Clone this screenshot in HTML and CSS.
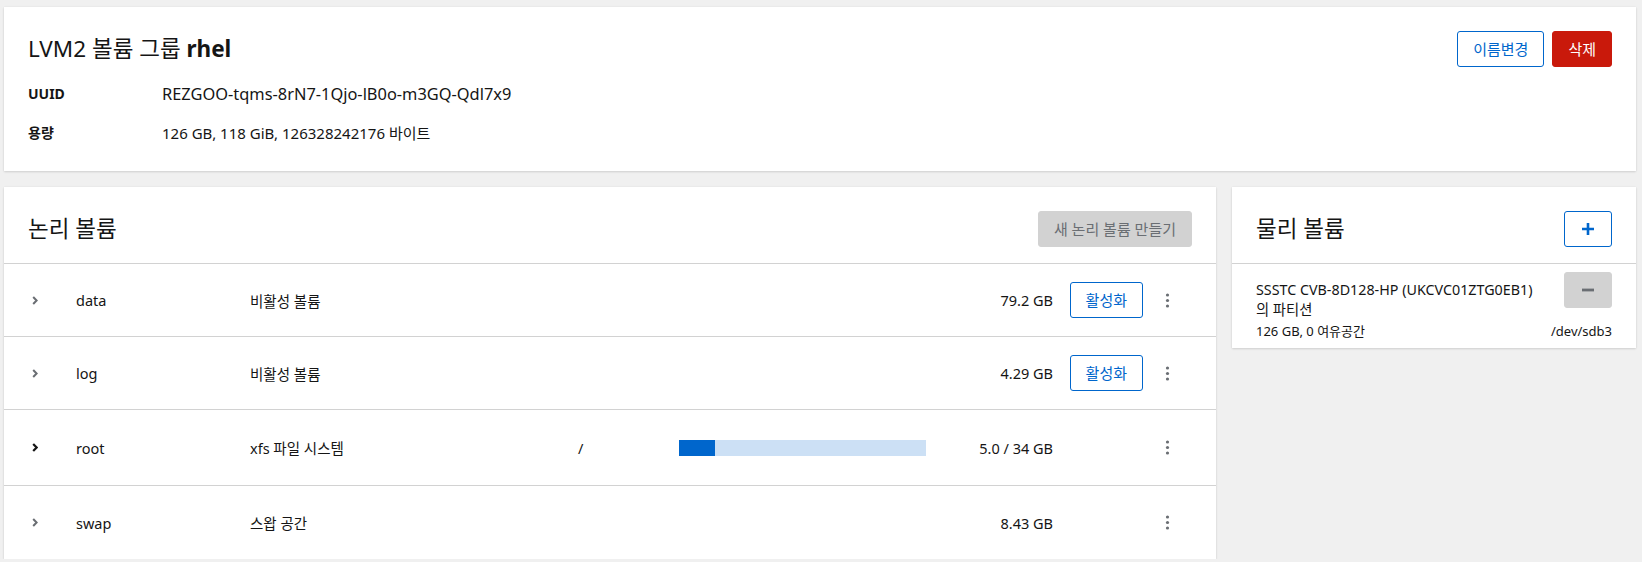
FILE: index.html
```html
<!DOCTYPE html>
<html lang="ko">
<head>
<meta charset="utf-8">
<title>LVM2 볼륨 그룹 rhel</title>
<link rel="stylesheet" href="styles.css">
</head>
<body>
<div class="page">
  <section class="card vg-card">
    <div class="card-head">
      <h1 class="title">LVM2 볼륨 그룹 <b>rhel</b></h1>
      <div class="actions">
        <button class="btn btn-secondary">이름변경</button>
        <button class="btn btn-danger">삭제</button>
      </div>
    </div>
    <dl class="dl">
      <dt>UUID</dt>
      <dd class="uuid">REZGOO-tqms-8rN7-1Qjo-lB0o-m3GQ-Qdl7x9</dd>
      <dt>용량</dt>
      <dd>126 GB, 118 GiB, 126328242176 바이트</dd>
    </dl>
  </section>

  <div class="columns">
    <section class="card lv-card">
      <div class="card-head bordered">
        <h2 class="title">논리 볼륨</h2>
        <button class="btn btn-disabled">새 논리 볼륨 만들기</button>
      </div>

      <div class="lv-row">
        <span class="toggle"><svg width="6" height="9" viewBox="0 0 6 9"><path d="M1.2 1 L4.6 4.5 L1.2 8" fill="none" stroke="currentColor" stroke-width="2"/></svg></span>
        <span class="name">data</span>
        <span class="type">비활성 볼륨</span>
        <span class="mount"></span>
        <span class="usage"></span>
        <span class="size">79.2 GB</span>
        <span class="action"><button class="btn btn-secondary">활성화</button></span>
        <span class="kebab"><svg width="5" height="15" viewBox="0 0 5 15"><circle cx="2.5" cy="2" r="1.6"/><circle cx="2.5" cy="7.5" r="1.6"/><circle cx="2.5" cy="13" r="1.6"/></svg></span>
      </div>

      <div class="lv-row">
        <span class="toggle"><svg width="6" height="9" viewBox="0 0 6 9"><path d="M1.2 1 L4.6 4.5 L1.2 8" fill="none" stroke="currentColor" stroke-width="2"/></svg></span>
        <span class="name">log</span>
        <span class="type">비활성 볼륨</span>
        <span class="mount"></span>
        <span class="usage"></span>
        <span class="size">4.29 GB</span>
        <span class="action"><button class="btn btn-secondary">활성화</button></span>
        <span class="kebab"><svg width="5" height="15" viewBox="0 0 5 15"><circle cx="2.5" cy="2" r="1.6"/><circle cx="2.5" cy="7.5" r="1.6"/><circle cx="2.5" cy="13" r="1.6"/></svg></span>
      </div>

      <div class="lv-row tall">
        <span class="toggle dark"><svg width="6" height="9" viewBox="0 0 6 9"><path d="M1.2 1 L4.6 4.5 L1.2 8" fill="none" stroke="currentColor" stroke-width="2.2"/></svg></span>
        <span class="name">root</span>
        <span class="type">xfs 파일 시스템</span>
        <span class="mount">/</span>
        <span class="usage"><span class="bar"><span class="bar-fill" style="width: 14.7%"></span></span></span>
        <span class="size">5.0 / 34 GB</span>
        <span class="action"></span>
        <span class="kebab"><svg width="5" height="15" viewBox="0 0 5 15"><circle cx="2.5" cy="2" r="1.6"/><circle cx="2.5" cy="7.5" r="1.6"/><circle cx="2.5" cy="13" r="1.6"/></svg></span>
      </div>

      <div class="lv-row last">
        <span class="toggle"><svg width="6" height="9" viewBox="0 0 6 9"><path d="M1.2 1 L4.6 4.5 L1.2 8" fill="none" stroke="currentColor" stroke-width="2"/></svg></span>
        <span class="name">swap</span>
        <span class="type">스왑 공간</span>
        <span class="mount"></span>
        <span class="usage"></span>
        <span class="size">8.43 GB</span>
        <span class="action"></span>
        <span class="kebab"><svg width="5" height="15" viewBox="0 0 5 15"><circle cx="2.5" cy="2" r="1.6"/><circle cx="2.5" cy="7.5" r="1.6"/><circle cx="2.5" cy="13" r="1.6"/></svg></span>
      </div>
    </section>

    <section class="card pv-card">
      <div class="card-head bordered">
        <h2 class="title">물리 볼륨</h2>
        <button class="btn btn-secondary btn-icon"><svg width="14" height="14" viewBox="0 0 14 14"><path d="M7 1 V13 M1 7 H13" stroke="currentColor" stroke-width="2.6" fill="none"/></svg></button>
      </div>
      <div class="pv-row">
        <div class="pv-info">
          <div class="pv-name">SSSTC CVB-8D128-HP (UKCVC01ZTG0EB1)<br>의 파티션</div>
          <div class="pv-small">126 GB, 0 여유공간</div>
        </div>
        <div class="pv-side">
          <button class="btn btn-disabled btn-icon"><svg width="14" height="14" viewBox="0 0 14 14"><path d="M1 7 H13" stroke="currentColor" stroke-width="2.8" fill="none"/></svg></button>
          <div class="pv-small">/dev/sdb3</div>
        </div>
      </div>
    </section>
  </div>
</div>
</body>
</html>
```

FILE: styles.css
```css
* { box-sizing: border-box; }

html, body {
  margin: 0;
  padding: 0;
  background: #f0f0f0;
}

body {
  font-family: "Noto Sans", "Noto Sans CJK KR", sans-serif;
  font-size: 14.5px;
  color: #151515;
}

.page {
  padding: 7px 6px 0 4px;
  display: flex;
  flex-direction: column;
  gap: 16px;
}

.card {
  background: #fff;
  box-shadow: 0 1px 2px 0 rgba(3, 3, 3, 0.12), 0 0 2px 0 rgba(3, 3, 3, 0.06);
}

.vg-card {
  padding: 24px 24px 26px 24px;
}

.card-head {
  display: flex;
  align-items: center;
  justify-content: space-between;
  height: 36px;
}

.card-head.bordered {
  box-sizing: content-box;
  padding: 24px 24px 16px 24px;
  border-bottom: 1px solid #d2d2d2;
}

.title {
  margin: 0;
  font-size: 22.5px;
  font-weight: 400;
  line-height: 36px;
}

.title b { font-weight: 700; }

.actions {
  display: flex;
  gap: 8px;
}

.btn {
  height: 36px;
  padding: 0 15px;
  border-radius: 3px;
  font-family: inherit;
  font-size: 15px;
  line-height: 20px;
  cursor: pointer;
  display: inline-flex;
  align-items: center;
  justify-content: center;
}

.btn-secondary {
  background: #fff;
  color: #0066cc;
  border: 1px solid #0066cc;
}

.btn-danger {
  background: #c9190b;
  color: #fff;
  border: 1px solid #c9190b;
}

.btn-disabled {
  background: #d2d2d2;
  color: #6a6e73;
  border: 1px solid #d2d2d2;
  cursor: default;
}

.btn-icon {
  width: 48px;
  padding: 0;
}

.dl {
  margin: 15px 0 0 0;
  display: grid;
  grid-template-columns: 134px 1fr;
  row-gap: 15px;
  line-height: 24px;
}

.dl dt {
  font-weight: 700;
  font-size: 14px;
}

.dl dd {
  margin: 0;
  font-size: 15px;
}

.dl dd.uuid {
  font-size: 16.4px;
}

.columns {
  display: grid;
  grid-template-columns: 1212px 404px;
  gap: 16px;
  align-items: start;
}

.lv-row {
  display: grid;
  grid-template-columns: 48px 174px 328px 101px 247px 127px 90px 49px;
  align-items: center;
  height: 73px;
  padding: 0 20px 0 24px;
  border-bottom: 1px solid #d2d2d2;
}

.lv-row.tall { height: 76px; }
.lv-row.last { border-bottom: 0; height: 73px; }

.toggle {
  color: #6a6e73;
  display: flex;
  align-items: center;
  padding-left: 4px;
}

.toggle.dark { color: #151515; }

.size { text-align: right; }

.action {
  display: flex;
  justify-content: flex-end;
}

.kebab {
  display: flex;
  justify-content: center;
  fill: #6a6e73;
}

.bar {
  display: block;
  height: 16px;
  background: #cce0f5;
}

.bar-fill {
  display: block;
  height: 100%;
  background: #0066cc;
}

.pv-row {
  display: flex;
  justify-content: space-between;
  padding: 8px 24px 8px 24px;
}

.pv-info {
  padding-top: 8px;
}

.pv-name {
  font-size: 14.3px;
  line-height: 20px;
}

.pv-small {
  font-size: 13px;
  line-height: 18px;
  margin-top: 2px;
}

.pv-side {
  display: flex;
  flex-direction: column;
  align-items: flex-end;
  justify-content: space-between;
}
```
